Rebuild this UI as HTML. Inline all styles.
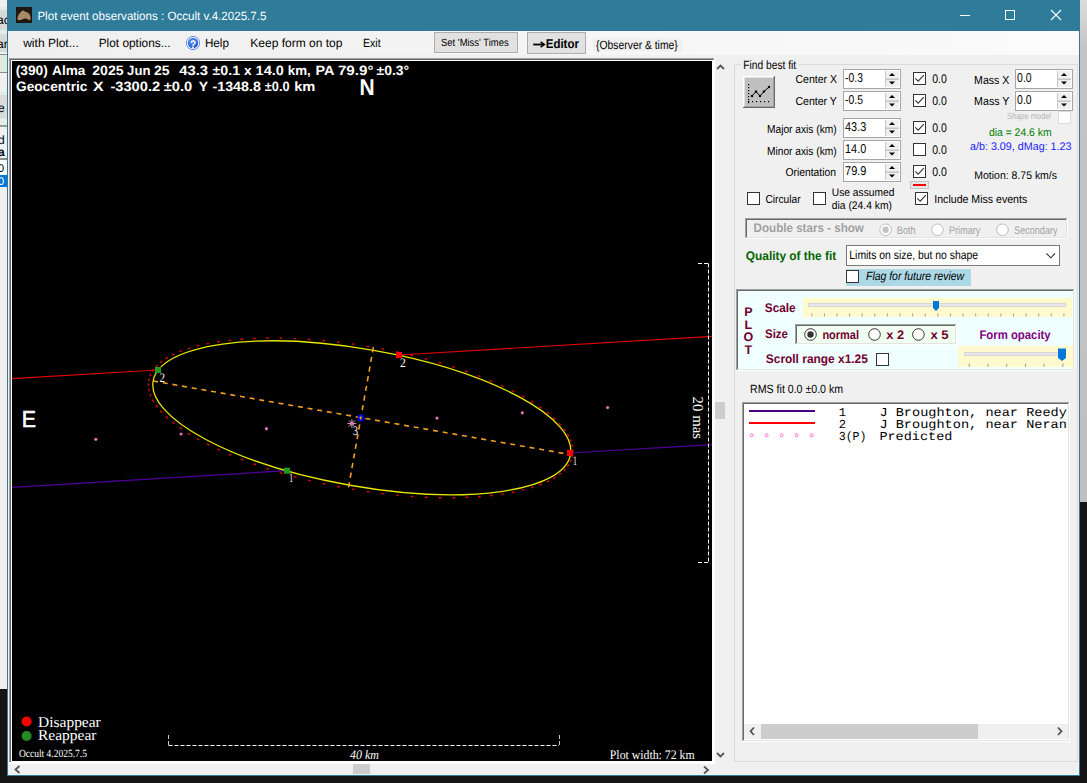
<!DOCTYPE html>
<html><head><meta charset="utf-8"><style>html,body{margin:0;padding:0;background:#151515;overflow:hidden}svg{display:block}</style></head>
<body><svg width="1087" height="783" viewBox="0 0 1087 783" text-rendering="geometricPrecision">
<rect x="0" y="0" width="1087" height="783" fill="#151515" />
<defs><linearGradient id="rg" x1="0" y1="0" x2="0" y2="1"><stop offset="0" stop-color="#dcdcdc"/><stop offset="0.1" stop-color="#c4c4c4"/><stop offset="1" stop-color="#c0c0c0"/></linearGradient><linearGradient id="mg" x1="0" y1="0" x2="1" y2="0"><stop offset="0" stop-color="#efefef"/><stop offset="0.5" stop-color="#f5f5f5"/><stop offset="1" stop-color="#fbfbfb"/></linearGradient><radialGradient id="hg" cx="0.4" cy="0.35" r="0.7"><stop offset="0" stop-color="#5d9cf5"/><stop offset="1" stop-color="#1a4fc9"/></radialGradient></defs>
<rect x="1080" y="0" width="7" height="502" fill="url(#rg)" />
<rect x="0" y="0" width="7" height="689" fill="#f0f0f0" />
<rect x="0" y="7" width="7" height="3" fill="#e2eee2" />
<rect x="0" y="10" width="7" height="20" fill="#d9d9d9" />
<rect x="0" y="30" width="7" height="4" fill="#e2eee2" />
<rect x="0" y="34" width="7" height="18" fill="#d9d9d9" />
<rect x="0" y="54" width="7" height="1" fill="#8a8a8a" />
<rect x="0" y="55" width="7" height="17" fill="#dfeadf" />
<rect x="0" y="72" width="7" height="1" fill="#8a8a8a" />
<rect x="0" y="73" width="7" height="19" fill="#f0f0f0" />
<rect x="0" y="92" width="7" height="3" fill="#e2eee2" />
<rect x="0" y="95" width="7" height="23" fill="#dadada" />
<rect x="0" y="118" width="7" height="7" fill="#e2eee2" />
<rect x="0" y="125" width="7" height="2" fill="#9a9a9a" />
<rect x="0" y="128" width="7" height="30" fill="#f0f0f0" />
<rect x="0" y="158" width="7" height="2" fill="#8a8a8a" />
<rect x="0" y="160" width="7" height="15" fill="#ffffff" />
<rect x="0" y="175" width="7" height="12" fill="#0078d7" />
<rect x="0" y="187" width="7" height="502" fill="#f0f0f0" />
<text x="-3" y="24" style="font-family:'Liberation Sans';font-size:12px" fill="#000">ac</text>
<text x="-3" y="48" style="font-family:'Liberation Sans';font-size:12px" fill="#000">ar</text>
<text x="-2" y="112" style="font-family:'Liberation Sans';font-size:12px" fill="#000">e</text>
<text x="-2" y="144" style="font-family:'Liberation Sans';font-size:12px" fill="#000">d</text>
<text x="-2" y="156" style="font-family:'Liberation Sans';font-size:12px;font-weight:bold" fill="#000">a</text>
<text x="-2" y="172" style="font-family:'Liberation Sans';font-size:11px" fill="#000">0</text>
<text x="-2" y="185" style="font-family:'Liberation Sans';font-size:11px" fill="#fff">0</text>
<rect x="7" y="0" width="1073" height="776" fill="#2e7b9a" />
<rect x="8" y="31" width="1071" height="744" fill="#f0f0f0" />
<rect x="16" y="7" width="16" height="16" fill="#1e1810" />
<path d="M17.5 19 C17.5 16 19 13.5 21 12 C22 10.5 23.5 10 24.5 11.2 C25.5 12.2 26.5 12 27.5 12.5 C29.5 13.5 31 16 30.5 19.5 C29.8 21 28.5 20 27.5 19 C26 18 24 18.5 22 19.5 C20 20.5 18 20.5 17.5 19Z" fill="#a88a66" stroke="none" stroke-width="1" />
<text x="37.40" y="20.20" textLength="229.01" lengthAdjust="spacingAndGlyphs" style="font-family:'Liberation Sans', sans-serif;font-size:12px;" fill="#fff" >Plot event observations : Occult v.4.2025.7.5</text>
<line x1="960" y1="15.5" x2="970" y2="15.5" stroke="#fff" stroke-width="1" />
<rect x="1005.5" y="10.5" width="9" height="9" fill="none" stroke="#fff" stroke-width="1"/>
<line x1="1051" y1="10" x2="1061" y2="20" stroke="#fff" stroke-width="1.1" />
<line x1="1061" y1="10" x2="1051" y2="20" stroke="#fff" stroke-width="1.1" />
<rect x="8" y="31" width="1071" height="24" fill="url(#mg)" />
<text x="23.16" y="46.80" textLength="55.61" lengthAdjust="spacingAndGlyphs" style="font-family:'Liberation Sans', sans-serif;font-size:12px;" fill="#000" >with Plot...</text>
<text x="98.70" y="46.80" textLength="71.89" lengthAdjust="spacingAndGlyphs" style="font-family:'Liberation Sans', sans-serif;font-size:12px;" fill="#000" >Plot options...</text>
<circle cx="193" cy="43" r="6.6" fill="#fff" stroke="#4a7fe0" stroke-width="0.9"/>
<circle cx="193" cy="43" r="5.2" fill="url(#hg)"/>
<text x="190.00" y="47.60" textLength="6.21" lengthAdjust="spacingAndGlyphs" style="font-family:'Liberation Sans', sans-serif;font-size:11px;font-weight:bold;" fill="#fff" >?</text>
<text x="204.90" y="46.80" textLength="24.02" lengthAdjust="spacingAndGlyphs" style="font-family:'Liberation Sans', sans-serif;font-size:12px;" fill="#000" >Help</text>
<text x="250.30" y="46.80" textLength="92.12" lengthAdjust="spacingAndGlyphs" style="font-family:'Liberation Sans', sans-serif;font-size:12px;" fill="#000" >Keep form on top</text>
<text x="363.00" y="46.80" textLength="17.62" lengthAdjust="spacingAndGlyphs" style="font-family:'Liberation Sans', sans-serif;font-size:12px;" fill="#000" >Exit</text>
<rect x="434.5" y="32.5" width="83" height="20" fill="#e1e1e1" stroke="#adadad" stroke-width="1"/>
<text x="441.00" y="45.90" textLength="67.71" lengthAdjust="spacingAndGlyphs" style="font-family:'Liberation Sans', sans-serif;font-size:10.5px;" fill="#000" >Set 'Miss' Times</text>
<rect x="527.5" y="32.5" width="58" height="21" fill="#e1e1e1" stroke="#adadad" stroke-width="1"/>
<line x1="533.2" y1="44.5" x2="543.5" y2="44.5" stroke="#000" stroke-width="1.8" />
<path d="M540.6 41.8 L544.4 44.5 L540.6 47.2" fill="none" stroke="#000" stroke-width="1.5" />
<text x="545.80" y="47.80" textLength="33.09" lengthAdjust="spacingAndGlyphs" style="font-family:'Liberation Sans', sans-serif;font-size:12.75px;font-weight:bold;" fill="#000" >Editor</text>
<rect x="593" y="38" width="89" height="13" fill="#f0f0f0" />
<text x="596.10" y="48.50" textLength="81.62" lengthAdjust="spacingAndGlyphs" style="font-family:'Liberation Sans', sans-serif;font-size:12px;" fill="#000" >{Observer &amp; time}</text>
<rect x="9" y="58" width="706" height="706" fill="#ffffff" />
<rect x="9" y="58" width="705" height="2" fill="#a0a0a0" />
<rect x="9" y="58" width="2" height="704" fill="#a0a0a0" />
<rect x="10" y="59" width="703" height="1" fill="#696969" />
<rect x="10" y="59" width="1" height="703" fill="#696969" />
<rect x="12" y="61" width="700" height="700" fill="#000" />
<rect x="8" y="764" width="707" height="11" fill="#f0f0f0" />
<rect x="715" y="58" width="18" height="717" fill="#f0f0f0" />
<rect x="353" y="764" width="17" height="10" fill="#cdcdcd" />
<rect x="715" y="402" width="10" height="17" fill="#cdcdcd" />
<path d="M19.5 766 L15.5 769.5 L19.5 773" fill="none" stroke="#555" stroke-width="1.8" />
<path d="M704 766.5 L708 770 L704 773.5" fill="none" stroke="#555" stroke-width="1.8" />
<path d="M717 69 L720.5 65.5 L724 69" fill="none" stroke="#555" stroke-width="1.8" />
<path d="M717 753 L720.5 756.5 L724 753" fill="none" stroke="#555" stroke-width="1.8" />
<g clip-path="url(#pc)">
<defs><clipPath id="pc"><rect x="12" y="61" width="700" height="700"/></clipPath></defs>
<text x="15.70" y="75.00" textLength="32.19" lengthAdjust="spacingAndGlyphs" style="font-family:'Liberation Sans', sans-serif;font-size:13.5px;font-weight:bold;" fill="#fff" >(390)</text>
<text x="52.10" y="75.00" textLength="33.37" lengthAdjust="spacingAndGlyphs" style="font-family:'Liberation Sans', sans-serif;font-size:13.5px;font-weight:bold;" fill="#fff" >Alma</text>
<text x="92.20" y="75.00" textLength="31.40" lengthAdjust="spacingAndGlyphs" style="font-family:'Liberation Sans', sans-serif;font-size:13.5px;font-weight:bold;" fill="#fff" >2025</text>
<text x="127.10" y="75.00" textLength="23.37" lengthAdjust="spacingAndGlyphs" style="font-family:'Liberation Sans', sans-serif;font-size:13.5px;font-weight:bold;" fill="#fff" >Jun</text>
<text x="154.00" y="75.00" textLength="15.63" lengthAdjust="spacingAndGlyphs" style="font-family:'Liberation Sans', sans-serif;font-size:13.5px;font-weight:bold;" fill="#fff" >25</text>
<text x="179.20" y="75.00" textLength="28.82" lengthAdjust="spacingAndGlyphs" style="font-family:'Liberation Sans', sans-serif;font-size:13.5px;font-weight:bold;" fill="#fff" >43.3</text>
<text x="212.50" y="75.00" textLength="27.59" lengthAdjust="spacingAndGlyphs" style="font-family:'Liberation Sans', sans-serif;font-size:13.5px;font-weight:bold;" fill="#fff" >±0.1</text>
<text x="244.00" y="75.00" textLength="7.62" lengthAdjust="spacingAndGlyphs" style="font-family:'Liberation Sans', sans-serif;font-size:13.5px;font-weight:bold;" fill="#fff" >x</text>
<text x="255.60" y="75.00" textLength="28.22" lengthAdjust="spacingAndGlyphs" style="font-family:'Liberation Sans', sans-serif;font-size:13.5px;font-weight:bold;" fill="#fff" >14.0</text>
<text x="287.80" y="75.00" textLength="22.98" lengthAdjust="spacingAndGlyphs" style="font-family:'Liberation Sans', sans-serif;font-size:13.5px;font-weight:bold;" fill="#fff" >km,</text>
<text x="315.40" y="75.00" textLength="19.00" lengthAdjust="spacingAndGlyphs" style="font-family:'Liberation Sans', sans-serif;font-size:13.5px;font-weight:bold;" fill="#fff" >PA</text>
<text x="337.90" y="75.00" textLength="35.62" lengthAdjust="spacingAndGlyphs" style="font-family:'Liberation Sans', sans-serif;font-size:13.5px;font-weight:bold;" fill="#fff" >79.9°</text>
<text x="376.50" y="75.00" textLength="32.68" lengthAdjust="spacingAndGlyphs" style="font-family:'Liberation Sans', sans-serif;font-size:13.5px;font-weight:bold;" fill="#fff" >±0.3°</text>
<text x="16.00" y="90.50" textLength="71.39" lengthAdjust="spacingAndGlyphs" style="font-family:'Liberation Sans', sans-serif;font-size:13.5px;font-weight:bold;" fill="#fff" >Geocentric</text>
<text x="93.00" y="90.50" textLength="10.63" lengthAdjust="spacingAndGlyphs" style="font-family:'Liberation Sans', sans-serif;font-size:13.5px;font-weight:bold;" fill="#fff" >X</text>
<text x="110.40" y="90.50" textLength="49.73" lengthAdjust="spacingAndGlyphs" style="font-family:'Liberation Sans', sans-serif;font-size:13.5px;font-weight:bold;" fill="#fff" >-3300.2</text>
<text x="163.80" y="90.50" textLength="28.49" lengthAdjust="spacingAndGlyphs" style="font-family:'Liberation Sans', sans-serif;font-size:13.5px;font-weight:bold;" fill="#fff" >±0.0</text>
<text x="198.70" y="90.50" textLength="9.33" lengthAdjust="spacingAndGlyphs" style="font-family:'Liberation Sans', sans-serif;font-size:13.5px;font-weight:bold;" fill="#fff" >Y</text>
<text x="212.50" y="90.50" textLength="48.32" lengthAdjust="spacingAndGlyphs" style="font-family:'Liberation Sans', sans-serif;font-size:13.5px;font-weight:bold;" fill="#fff" >-1348.8</text>
<text x="264.80" y="90.50" textLength="24.79" lengthAdjust="spacingAndGlyphs" style="font-family:'Liberation Sans', sans-serif;font-size:13.5px;font-weight:bold;" fill="#fff" >±0.0</text>
<text x="294.20" y="90.50" textLength="21.20" lengthAdjust="spacingAndGlyphs" style="font-family:'Liberation Sans', sans-serif;font-size:13.5px;font-weight:bold;" fill="#fff" >km</text>
<text x="359.60" y="94.90" textLength="15.15" lengthAdjust="spacingAndGlyphs" style="font-family:'Liberation Sans', sans-serif;font-size:23px;font-weight:bold;" fill="#fff" >N</text>
<text x="21.80" y="427.00" textLength="14.24" lengthAdjust="spacingAndGlyphs" style="font-family:'Liberation Sans', sans-serif;font-size:23px;" fill="#fff" stroke="#fff" stroke-width="0.6">E</text>
<line x1="12" y1="378.7" x2="157.7" y2="370" stroke="#e00000" stroke-width="1.2" />
<line x1="399" y1="355" x2="712" y2="336.4" stroke="#e00000" stroke-width="1.2" />
<line x1="12" y1="487.3" x2="287" y2="470.7" stroke="#50009a" stroke-width="1.2" />
<line x1="570" y1="453" x2="712" y2="444.6" stroke="#50009a" stroke-width="1.2" />
<circle cx="10.5" cy="444.6" r="1.6" fill="#e070c0"/>
<circle cx="95.8" cy="439.3" r="1.6" fill="#e070c0"/>
<circle cx="181.1" cy="434.0" r="1.6" fill="#e070c0"/>
<circle cx="266.4" cy="428.7" r="1.6" fill="#e070c0"/>
<circle cx="437.0" cy="418.1" r="1.6" fill="#e070c0"/>
<circle cx="522.3" cy="412.8" r="1.6" fill="#e070c0"/>
<circle cx="607.6" cy="407.5" r="1.6" fill="#e070c0"/>
<line x1="572.58" y1="454.62" x2="572.00" y2="457.36" stroke="#dd0000" stroke-width="1.4" />
<line x1="571.31" y1="459.51" x2="570.19" y2="462.08" stroke="#dd0000" stroke-width="1.4" />
<line x1="568.98" y1="464.24" x2="567.40" y2="466.55" stroke="#dd0000" stroke-width="1.4" />
<line x1="565.58" y1="468.75" x2="563.64" y2="470.77" stroke="#dd0000" stroke-width="1.4" />
<line x1="561.15" y1="473.00" x2="558.95" y2="474.73" stroke="#dd0000" stroke-width="1.4" />
<line x1="555.70" y1="476.97" x2="553.31" y2="478.44" stroke="#dd0000" stroke-width="1.4" />
<line x1="549.28" y1="480.64" x2="546.76" y2="481.87" stroke="#dd0000" stroke-width="1.4" />
<line x1="541.93" y1="483.98" x2="539.32" y2="485.01" stroke="#dd0000" stroke-width="1.4" />
<line x1="533.69" y1="486.99" x2="531.02" y2="487.83" stroke="#dd0000" stroke-width="1.4" />
<line x1="524.60" y1="489.64" x2="521.88" y2="490.33" stroke="#dd0000" stroke-width="1.4" />
<line x1="514.71" y1="491.94" x2="511.96" y2="492.48" stroke="#dd0000" stroke-width="1.4" />
<line x1="504.07" y1="493.86" x2="501.30" y2="494.29" stroke="#dd0000" stroke-width="1.4" />
<line x1="492.74" y1="495.41" x2="489.96" y2="495.72" stroke="#dd0000" stroke-width="1.4" />
<line x1="480.77" y1="496.58" x2="477.97" y2="496.79" stroke="#dd0000" stroke-width="1.4" />
<line x1="468.21" y1="497.35" x2="465.42" y2="497.47" stroke="#dd0000" stroke-width="1.4" />
<line x1="455.14" y1="497.74" x2="452.34" y2="497.77" stroke="#dd0000" stroke-width="1.4" />
<line x1="441.61" y1="497.73" x2="438.82" y2="497.68" stroke="#dd0000" stroke-width="1.4" />
<line x1="427.70" y1="497.33" x2="424.90" y2="497.21" stroke="#dd0000" stroke-width="1.4" />
<line x1="413.46" y1="496.55" x2="410.67" y2="496.35" stroke="#dd0000" stroke-width="1.4" />
<line x1="398.97" y1="495.38" x2="396.19" y2="495.11" stroke="#dd0000" stroke-width="1.4" />
<line x1="384.30" y1="493.83" x2="381.52" y2="493.50" stroke="#dd0000" stroke-width="1.4" />
<line x1="369.53" y1="491.91" x2="366.75" y2="491.51" stroke="#dd0000" stroke-width="1.4" />
<line x1="354.71" y1="489.63" x2="351.95" y2="489.17" stroke="#dd0000" stroke-width="1.4" />
<line x1="339.93" y1="487.01" x2="337.18" y2="486.48" stroke="#dd0000" stroke-width="1.4" />
<line x1="325.25" y1="484.05" x2="322.52" y2="483.45" stroke="#dd0000" stroke-width="1.4" />
<line x1="310.76" y1="480.76" x2="308.03" y2="480.11" stroke="#dd0000" stroke-width="1.4" />
<line x1="296.51" y1="477.18" x2="293.80" y2="476.45" stroke="#dd0000" stroke-width="1.4" />
<line x1="282.58" y1="473.30" x2="279.89" y2="472.51" stroke="#dd0000" stroke-width="1.4" />
<line x1="269.03" y1="469.16" x2="266.37" y2="468.30" stroke="#dd0000" stroke-width="1.4" />
<line x1="255.94" y1="464.78" x2="253.30" y2="463.85" stroke="#dd0000" stroke-width="1.4" />
<line x1="243.36" y1="460.17" x2="240.75" y2="459.16" stroke="#dd0000" stroke-width="1.4" />
<line x1="231.35" y1="455.36" x2="228.77" y2="454.27" stroke="#dd0000" stroke-width="1.4" />
<line x1="219.98" y1="450.37" x2="217.44" y2="449.19" stroke="#dd0000" stroke-width="1.4" />
<line x1="209.30" y1="445.23" x2="206.80" y2="443.96" stroke="#dd0000" stroke-width="1.4" />
<line x1="199.35" y1="439.96" x2="196.91" y2="438.59" stroke="#dd0000" stroke-width="1.4" />
<line x1="190.19" y1="434.60" x2="187.82" y2="433.11" stroke="#dd0000" stroke-width="1.4" />
<line x1="181.86" y1="429.16" x2="179.57" y2="427.55" stroke="#dd0000" stroke-width="1.4" />
<line x1="174.40" y1="423.68" x2="172.21" y2="421.93" stroke="#dd0000" stroke-width="1.4" />
<line x1="167.83" y1="418.18" x2="165.77" y2="416.28" stroke="#dd0000" stroke-width="1.4" />
<line x1="162.19" y1="412.70" x2="160.30" y2="410.63" stroke="#dd0000" stroke-width="1.4" />
<line x1="157.49" y1="407.25" x2="155.83" y2="405.00" stroke="#dd0000" stroke-width="1.4" />
<line x1="153.76" y1="401.86" x2="152.38" y2="399.42" stroke="#dd0000" stroke-width="1.4" />
<line x1="150.99" y1="396.55" x2="149.98" y2="393.94" stroke="#dd0000" stroke-width="1.4" />
<line x1="149.20" y1="391.33" x2="148.65" y2="388.58" stroke="#dd0000" stroke-width="1.4" />
<line x1="148.40" y1="386.20" x2="148.40" y2="383.40" stroke="#dd0000" stroke-width="1.4" />
<line x1="148.62" y1="381.18" x2="149.20" y2="378.44" stroke="#dd0000" stroke-width="1.4" />
<line x1="149.89" y1="376.29" x2="151.01" y2="373.72" stroke="#dd0000" stroke-width="1.4" />
<line x1="152.22" y1="371.56" x2="153.80" y2="369.25" stroke="#dd0000" stroke-width="1.4" />
<line x1="155.62" y1="367.05" x2="157.56" y2="365.03" stroke="#dd0000" stroke-width="1.4" />
<line x1="160.05" y1="362.80" x2="162.25" y2="361.07" stroke="#dd0000" stroke-width="1.4" />
<line x1="165.50" y1="358.83" x2="167.89" y2="357.36" stroke="#dd0000" stroke-width="1.4" />
<line x1="171.92" y1="355.16" x2="174.44" y2="353.93" stroke="#dd0000" stroke-width="1.4" />
<line x1="179.27" y1="351.82" x2="181.88" y2="350.79" stroke="#dd0000" stroke-width="1.4" />
<line x1="187.51" y1="348.81" x2="190.18" y2="347.97" stroke="#dd0000" stroke-width="1.4" />
<line x1="196.60" y1="346.16" x2="199.32" y2="345.47" stroke="#dd0000" stroke-width="1.4" />
<line x1="206.49" y1="343.86" x2="209.24" y2="343.32" stroke="#dd0000" stroke-width="1.4" />
<line x1="217.13" y1="341.94" x2="219.90" y2="341.51" stroke="#dd0000" stroke-width="1.4" />
<line x1="228.46" y1="340.39" x2="231.24" y2="340.08" stroke="#dd0000" stroke-width="1.4" />
<line x1="240.43" y1="339.22" x2="243.23" y2="339.01" stroke="#dd0000" stroke-width="1.4" />
<line x1="252.99" y1="338.45" x2="255.78" y2="338.33" stroke="#dd0000" stroke-width="1.4" />
<line x1="266.06" y1="338.06" x2="268.86" y2="338.03" stroke="#dd0000" stroke-width="1.4" />
<line x1="279.59" y1="338.07" x2="282.38" y2="338.12" stroke="#dd0000" stroke-width="1.4" />
<line x1="293.50" y1="338.47" x2="296.30" y2="338.59" stroke="#dd0000" stroke-width="1.4" />
<line x1="307.74" y1="339.25" x2="310.53" y2="339.45" stroke="#dd0000" stroke-width="1.4" />
<line x1="322.23" y1="340.42" x2="325.01" y2="340.69" stroke="#dd0000" stroke-width="1.4" />
<line x1="336.90" y1="341.97" x2="339.68" y2="342.30" stroke="#dd0000" stroke-width="1.4" />
<line x1="351.67" y1="343.89" x2="354.45" y2="344.29" stroke="#dd0000" stroke-width="1.4" />
<line x1="366.49" y1="346.17" x2="369.25" y2="346.63" stroke="#dd0000" stroke-width="1.4" />
<line x1="381.27" y1="348.79" x2="384.02" y2="349.32" stroke="#dd0000" stroke-width="1.4" />
<line x1="395.95" y1="351.75" x2="398.68" y2="352.35" stroke="#dd0000" stroke-width="1.4" />
<line x1="410.44" y1="355.04" x2="413.17" y2="355.69" stroke="#dd0000" stroke-width="1.4" />
<line x1="424.69" y1="358.62" x2="427.40" y2="359.35" stroke="#dd0000" stroke-width="1.4" />
<line x1="438.62" y1="362.50" x2="441.31" y2="363.29" stroke="#dd0000" stroke-width="1.4" />
<line x1="452.17" y1="366.64" x2="454.83" y2="367.50" stroke="#dd0000" stroke-width="1.4" />
<line x1="465.26" y1="371.02" x2="467.90" y2="371.95" stroke="#dd0000" stroke-width="1.4" />
<line x1="477.84" y1="375.63" x2="480.45" y2="376.64" stroke="#dd0000" stroke-width="1.4" />
<line x1="489.85" y1="380.44" x2="492.43" y2="381.53" stroke="#dd0000" stroke-width="1.4" />
<line x1="501.22" y1="385.43" x2="503.76" y2="386.61" stroke="#dd0000" stroke-width="1.4" />
<line x1="511.90" y1="390.57" x2="514.40" y2="391.84" stroke="#dd0000" stroke-width="1.4" />
<line x1="521.85" y1="395.84" x2="524.29" y2="397.21" stroke="#dd0000" stroke-width="1.4" />
<line x1="531.01" y1="401.20" x2="533.38" y2="402.69" stroke="#dd0000" stroke-width="1.4" />
<line x1="539.34" y1="406.64" x2="541.63" y2="408.25" stroke="#dd0000" stroke-width="1.4" />
<line x1="546.80" y1="412.12" x2="548.99" y2="413.87" stroke="#dd0000" stroke-width="1.4" />
<line x1="553.37" y1="417.62" x2="555.43" y2="419.52" stroke="#dd0000" stroke-width="1.4" />
<line x1="559.01" y1="423.10" x2="560.90" y2="425.17" stroke="#dd0000" stroke-width="1.4" />
<line x1="563.71" y1="428.55" x2="565.37" y2="430.80" stroke="#dd0000" stroke-width="1.4" />
<line x1="567.44" y1="433.94" x2="568.82" y2="436.38" stroke="#dd0000" stroke-width="1.4" />
<line x1="570.21" y1="439.25" x2="571.22" y2="441.86" stroke="#dd0000" stroke-width="1.4" />
<line x1="572.00" y1="444.47" x2="572.55" y2="447.22" stroke="#dd0000" stroke-width="1.4" />
<line x1="572.80" y1="449.60" x2="572.80" y2="452.40" stroke="#dd0000" stroke-width="1.4" />
<ellipse cx="361.8" cy="417.8" rx="211.9" ry="68.5" transform="rotate(10 361.8 417.8)" fill="none" stroke="#e6e600" stroke-width="1.3"/>
<line x1="153.1" y1="381.0" x2="570.5" y2="454.6" stroke="#f0a020" stroke-width="1.6" stroke-dasharray="5 4.8"/>
<line x1="373.4" y1="347.2" x2="348.3" y2="488.6" stroke="#f0a020" stroke-width="1.6" stroke-dasharray="5.2 4.6"/>
<rect x="155.0" y="367.0" width="6" height="6" fill="#1f9a1f" />
<rect x="396.0" y="352.0" width="6" height="6" fill="#ff0000" />
<rect x="284.0" y="467.7" width="6" height="6" fill="#1f9a1f" />
<rect x="567.0" y="450.0" width="6" height="6" fill="#ff0000" />
<text x="159.50" y="382.00" textLength="5.50" lengthAdjust="spacingAndGlyphs" style="font-family:'Liberation Serif', serif;font-size:13px;" fill="#fff" >2</text>
<text x="400.00" y="367.00" textLength="5.80" lengthAdjust="spacingAndGlyphs" style="font-family:'Liberation Serif', serif;font-size:13px;" fill="#fff" >2</text>
<text x="289.20" y="482.00" textLength="3.80" lengthAdjust="spacingAndGlyphs" style="font-family:'Liberation Serif', serif;font-size:13px;" fill="#fff" >1</text>
<text x="573.00" y="465.00" textLength="3.90" lengthAdjust="spacingAndGlyphs" style="font-family:'Liberation Serif', serif;font-size:13px;" fill="#fff" >1</text>
<text x="353.00" y="435.00" textLength="5.00" lengthAdjust="spacingAndGlyphs" style="font-family:'Liberation Serif', serif;font-size:13px;" fill="#fff" >3</text>
<circle cx="361" cy="418" r="2.6" fill="none" stroke="#0000ff" stroke-width="1.8"/>
<line x1="347.40" y1="423.50" x2="356.40" y2="423.50" stroke="#a8a8a8" stroke-width="1" />
<line x1="348.72" y1="420.32" x2="355.08" y2="426.68" stroke="#a8a8a8" stroke-width="1" />
<line x1="351.90" y1="419.00" x2="351.90" y2="428.00" stroke="#a8a8a8" stroke-width="1" />
<line x1="355.08" y1="420.32" x2="348.72" y2="426.68" stroke="#a8a8a8" stroke-width="1" />
<circle cx="351.9" cy="423.5" r="2" fill="#f070c0"/>
<line x1="708.5" y1="263.5" x2="708.5" y2="562.5" stroke="#fff" stroke-width="1" stroke-dasharray="4 2"/>
<line x1="698" y1="263.5" x2="709" y2="263.5" stroke="#fff" stroke-width="1" stroke-dasharray="4 2" stroke-dashoffset="0"/>
<line x1="698" y1="562.5" x2="709" y2="562.5" stroke="#fff" stroke-width="1" stroke-dasharray="4 2"/>
<line x1="168.5" y1="745.5" x2="559" y2="745.5" stroke="#fff" stroke-width="1" stroke-dasharray="4 2"/>
<line x1="168.5" y1="735" x2="168.5" y2="746" stroke="#c8c8c8" stroke-width="1" stroke-dasharray="4 2"/>
<line x1="559.5" y1="735" x2="559.5" y2="746" stroke="#c8c8c8" stroke-width="1" stroke-dasharray="4 2"/>
<g transform="translate(692.5 396.6) rotate(90)">
<text x="0.00" y="0.00" textLength="42.41" lengthAdjust="spacingAndGlyphs" style="font-family:'Liberation Serif', serif;font-size:15px;" fill="#fff" >20 mas</text>
</g>
<text x="350.00" y="758.80" textLength="29.01" lengthAdjust="spacingAndGlyphs" style="font-family:'Liberation Serif', serif;font-size:13px;font-style:italic;" fill="#fff" >40 km</text>
<text x="609.80" y="758.90" textLength="84.80" lengthAdjust="spacingAndGlyphs" style="font-family:'Liberation Serif', serif;font-size:13px;" fill="#fff" >Plot width: 72 km</text>
<circle cx="26.6" cy="721.5" r="5" fill="#ff0000"/>
<circle cx="26.6" cy="736" r="5" fill="#228b22"/>
<text x="38.00" y="727.00" textLength="62.78" lengthAdjust="spacingAndGlyphs" style="font-family:'Liberation Serif', serif;font-size:15px;" fill="#fff" >Disappear</text>
<text x="38.00" y="740.40" textLength="58.51" lengthAdjust="spacingAndGlyphs" style="font-family:'Liberation Serif', serif;font-size:15px;" fill="#fff" >Reappear</text>
<text x="18.90" y="756.50" textLength="68.10" lengthAdjust="spacingAndGlyphs" style="font-family:'Liberation Serif', serif;font-size:11px;" fill="#fff" >Occult 4.2025.7.5</text>
</g>
<rect x="734.5" y="64.5" width="343" height="697" fill="none" stroke="#dcdcdc" stroke-width="1"/>
<rect x="741" y="58" width="58" height="12" fill="#f0f0f0" />
<text x="743.30" y="68.80" textLength="52.89" lengthAdjust="spacingAndGlyphs" style="font-family:'Liberation Sans', sans-serif;font-size:12px;" fill="#000" >Find best fit</text>
<rect x="743" y="76" width="32" height="32" fill="#696969" />
<rect x="743" y="76" width="31" height="31" fill="#fff" />
<rect x="744" y="77" width="30" height="30" fill="#a0a0a0" />
<rect x="744" y="77" width="29" height="29" fill="#e3e3e3" />
<rect x="745" y="78" width="28" height="28" fill="#c0c0c0" />
<rect x="748" y="84" width="1.2" height="1.2" fill="#000" />
<rect x="748" y="87" width="1.2" height="1.2" fill="#000" />
<rect x="748" y="90" width="1.2" height="1.2" fill="#000" />
<rect x="748" y="93" width="1.2" height="1.2" fill="#000" />
<rect x="748" y="96" width="1.2" height="1.2" fill="#000" />
<rect x="748" y="99" width="1.2" height="1.2" fill="#000" />
<rect x="748" y="102" width="1.2" height="1.2" fill="#000" />
<rect x="748" y="101" width="1.2" height="1.2" fill="#000" />
<rect x="752" y="101" width="1.2" height="1.2" fill="#000" />
<rect x="756" y="101" width="1.2" height="1.2" fill="#000" />
<rect x="760" y="101" width="1.2" height="1.2" fill="#000" />
<rect x="764" y="101" width="1.2" height="1.2" fill="#000" />
<rect x="768" y="101" width="1.2" height="1.2" fill="#000" />
<path d="M752 96 L756 91.5 L760 96 L764 91.5 L769 87" fill="none" stroke="#000" stroke-width="1" />
<circle cx="752" cy="96" r="1.2" fill="#000"/>
<circle cx="756" cy="91.5" r="1.2" fill="#000"/>
<circle cx="760" cy="96" r="1.2" fill="#000"/>
<circle cx="764" cy="91.5" r="1.2" fill="#000"/>
<circle cx="769" cy="87" r="1.2" fill="#000"/>
<text x="795.50" y="83.30" textLength="41.41" lengthAdjust="spacingAndGlyphs" style="font-family:'Liberation Sans', sans-serif;font-size:11.5px;" fill="#000" >Center X</text>
<text x="795.50" y="105.20" textLength="41.38" lengthAdjust="spacingAndGlyphs" style="font-family:'Liberation Sans', sans-serif;font-size:11.5px;" fill="#000" >Center Y</text>
<text x="767.00" y="132.60" textLength="69.69" lengthAdjust="spacingAndGlyphs" style="font-family:'Liberation Sans', sans-serif;font-size:11.5px;" fill="#000" >Major axis (km)</text>
<text x="767.00" y="154.50" textLength="69.69" lengthAdjust="spacingAndGlyphs" style="font-family:'Liberation Sans', sans-serif;font-size:11.5px;" fill="#000" >Minor axis (km)</text>
<text x="785.40" y="175.80" textLength="50.62" lengthAdjust="spacingAndGlyphs" style="font-family:'Liberation Sans', sans-serif;font-size:11.5px;" fill="#000" >Orientation</text>
<rect x="843.5" y="69.5" width="57" height="19" fill="#fff" stroke="#a6a6a6" stroke-width="1"/>
<rect x="885" y="71" width="14" height="16" fill="#f0f0f0" />
<rect x="885" y="71" width="1" height="16" fill="#c8c8c8" />
<rect x="886" y="78.5" width="13" height="1.5" fill="#c4c4c4" />
<path d="M889 76 L892 73 L895 76Z" fill="#000" stroke="none" stroke-width="1" />
<path d="M889 81.5 L892 84.5 L895 81.5Z" fill="#000" stroke="none" stroke-width="1" />
<text x="845.10" y="82.10" textLength="17.78" lengthAdjust="spacingAndGlyphs" style="font-family:'Liberation Sans', sans-serif;font-size:12.75px;" fill="#000" >-0.3</text>
<rect x="843.5" y="91.5" width="57" height="19" fill="#fff" stroke="#a6a6a6" stroke-width="1"/>
<rect x="885" y="93" width="14" height="16" fill="#f0f0f0" />
<rect x="885" y="93" width="1" height="16" fill="#c8c8c8" />
<rect x="886" y="100.5" width="13" height="1.5" fill="#c4c4c4" />
<path d="M889 98 L892 95 L895 98Z" fill="#000" stroke="none" stroke-width="1" />
<path d="M889 103.5 L892 106.5 L895 103.5Z" fill="#000" stroke="none" stroke-width="1" />
<text x="845.10" y="104.10" textLength="17.78" lengthAdjust="spacingAndGlyphs" style="font-family:'Liberation Sans', sans-serif;font-size:12.75px;" fill="#000" >-0.5</text>
<rect x="843.5" y="118.5" width="57" height="19" fill="#fff" stroke="#a6a6a6" stroke-width="1"/>
<rect x="885" y="120" width="14" height="16" fill="#f0f0f0" />
<rect x="885" y="120" width="1" height="16" fill="#c8c8c8" />
<rect x="886" y="127.5" width="13" height="1.5" fill="#c4c4c4" />
<path d="M889 125 L892 122 L895 125Z" fill="#000" stroke="none" stroke-width="1" />
<path d="M889 130.5 L892 133.5 L895 130.5Z" fill="#000" stroke="none" stroke-width="1" />
<text x="845.10" y="131.10" textLength="21.11" lengthAdjust="spacingAndGlyphs" style="font-family:'Liberation Sans', sans-serif;font-size:12.75px;" fill="#000" >43.3</text>
<rect x="843.5" y="140.5" width="57" height="19" fill="#fff" stroke="#a6a6a6" stroke-width="1"/>
<rect x="885" y="142" width="14" height="16" fill="#f0f0f0" />
<rect x="885" y="142" width="1" height="16" fill="#c8c8c8" />
<rect x="886" y="149.5" width="13" height="1.5" fill="#c4c4c4" />
<path d="M889 147 L892 144 L895 147Z" fill="#000" stroke="none" stroke-width="1" />
<path d="M889 152.5 L892 155.5 L895 152.5Z" fill="#000" stroke="none" stroke-width="1" />
<text x="845.10" y="153.10" textLength="21.11" lengthAdjust="spacingAndGlyphs" style="font-family:'Liberation Sans', sans-serif;font-size:12.75px;" fill="#000" >14.0</text>
<rect x="843.5" y="162.5" width="57" height="19" fill="#fff" stroke="#a6a6a6" stroke-width="1"/>
<rect x="885" y="164" width="14" height="16" fill="#f0f0f0" />
<rect x="885" y="164" width="1" height="16" fill="#c8c8c8" />
<rect x="886" y="171.5" width="13" height="1.5" fill="#c4c4c4" />
<path d="M889 169 L892 166 L895 169Z" fill="#000" stroke="none" stroke-width="1" />
<path d="M889 174.5 L892 177.5 L895 174.5Z" fill="#000" stroke="none" stroke-width="1" />
<text x="845.10" y="175.10" textLength="21.31" lengthAdjust="spacingAndGlyphs" style="font-family:'Liberation Sans', sans-serif;font-size:12.75px;" fill="#000" >79.9</text>
<rect x="1015.5" y="69.5" width="57" height="19" fill="#fff" stroke="#a6a6a6" stroke-width="1"/>
<rect x="1057" y="71" width="14" height="16" fill="#f0f0f0" />
<rect x="1057" y="71" width="1" height="16" fill="#c8c8c8" />
<rect x="1058" y="78.5" width="13" height="1.5" fill="#c4c4c4" />
<path d="M1061 76 L1064 73 L1067 76Z" fill="#000" stroke="none" stroke-width="1" />
<path d="M1061 81.5 L1064 84.5 L1067 81.5Z" fill="#000" stroke="none" stroke-width="1" />
<text x="1017.10" y="82.10" textLength="14.50" lengthAdjust="spacingAndGlyphs" style="font-family:'Liberation Sans', sans-serif;font-size:12.75px;" fill="#000" >0.0</text>
<rect x="1015.5" y="91.5" width="57" height="19" fill="#fff" stroke="#a6a6a6" stroke-width="1"/>
<rect x="1057" y="93" width="14" height="16" fill="#f0f0f0" />
<rect x="1057" y="93" width="1" height="16" fill="#c8c8c8" />
<rect x="1058" y="100.5" width="13" height="1.5" fill="#c4c4c4" />
<path d="M1061 98 L1064 95 L1067 98Z" fill="#000" stroke="none" stroke-width="1" />
<path d="M1061 103.5 L1064 106.5 L1067 103.5Z" fill="#000" stroke="none" stroke-width="1" />
<text x="1017.10" y="104.10" textLength="14.50" lengthAdjust="spacingAndGlyphs" style="font-family:'Liberation Sans', sans-serif;font-size:12.75px;" fill="#000" >0.0</text>
<rect x="913.5" y="72.5" width="12" height="12" fill="#fff" stroke="#333333" stroke-width="1"/>
<path d="M915.3 78.3 L918.2 81.2 L923.8 75.2" fill="none" stroke="#333" stroke-width="1.1" />
<rect x="913.5" y="94.5" width="12" height="12" fill="#fff" stroke="#333333" stroke-width="1"/>
<path d="M915.3 100.3 L918.2 103.2 L923.8 97.2" fill="none" stroke="#333" stroke-width="1.1" />
<rect x="913.5" y="121.5" width="12" height="12" fill="#fff" stroke="#333333" stroke-width="1"/>
<path d="M915.3 127.3 L918.2 130.2 L923.8 124.2" fill="none" stroke="#333" stroke-width="1.1" />
<rect x="913.5" y="143.5" width="12" height="12" fill="#fff" stroke="#333333" stroke-width="1"/>
<rect x="913.5" y="165.5" width="12" height="12" fill="#fff" stroke="#333333" stroke-width="1"/>
<path d="M915.3 171.3 L918.2 174.2 L923.8 168.2" fill="none" stroke="#333" stroke-width="1.1" />
<text x="932.20" y="83.00" textLength="14.60" lengthAdjust="spacingAndGlyphs" style="font-family:'Liberation Sans', sans-serif;font-size:12.5px;" fill="#000" >0.0</text>
<text x="932.20" y="104.80" textLength="14.60" lengthAdjust="spacingAndGlyphs" style="font-family:'Liberation Sans', sans-serif;font-size:12.5px;" fill="#000" >0.0</text>
<text x="932.20" y="132.20" textLength="14.60" lengthAdjust="spacingAndGlyphs" style="font-family:'Liberation Sans', sans-serif;font-size:12.5px;" fill="#000" >0.0</text>
<text x="932.20" y="154.20" textLength="14.60" lengthAdjust="spacingAndGlyphs" style="font-family:'Liberation Sans', sans-serif;font-size:12.5px;" fill="#000" >0.0</text>
<text x="932.20" y="176.20" textLength="14.60" lengthAdjust="spacingAndGlyphs" style="font-family:'Liberation Sans', sans-serif;font-size:12.5px;" fill="#000" >0.0</text>
<rect x="910.5" y="181.5" width="18" height="7" fill="#e6e6e6" stroke="#c4c4c4" stroke-width="1"/>
<rect x="913" y="184" width="13" height="2" fill="#ff0000" />
<text x="974.10" y="83.50" textLength="35.29" lengthAdjust="spacingAndGlyphs" style="font-family:'Liberation Sans', sans-serif;font-size:11.5px;" fill="#000" >Mass X</text>
<text x="974.10" y="105.40" textLength="35.31" lengthAdjust="spacingAndGlyphs" style="font-family:'Liberation Sans', sans-serif;font-size:11.5px;" fill="#000" >Mass Y</text>
<text x="1007.00" y="118.80" textLength="43.99" lengthAdjust="spacingAndGlyphs" style="font-family:'Liberation Sans', sans-serif;font-size:9px;" fill="#b4b4b4" >Shape model</text>
<rect x="1058.5" y="111.5" width="12" height="12" fill="#fff" stroke="#dcdcdc" stroke-width="1"/>
<text x="988.90" y="135.50" textLength="62.71" lengthAdjust="spacingAndGlyphs" style="font-family:'Liberation Sans', sans-serif;font-size:11px;" fill="#008000" >dia = 24.6 km</text>
<text x="970.00" y="149.60" textLength="101.51" lengthAdjust="spacingAndGlyphs" style="font-family:'Liberation Sans', sans-serif;font-size:11px;" fill="#2020ff" >a/b: 3.09, dMag: 1.23</text>
<text x="974.30" y="179.40" textLength="82.72" lengthAdjust="spacingAndGlyphs" style="font-family:'Liberation Sans', sans-serif;font-size:11px;" fill="#000" >Motion: 8.75 km/s</text>
<rect x="747.5" y="192.5" width="12" height="12" fill="#fff" stroke="#333333" stroke-width="1"/>
<text x="765.40" y="202.70" textLength="35.20" lengthAdjust="spacingAndGlyphs" style="font-family:'Liberation Sans', sans-serif;font-size:11.5px;" fill="#000" >Circular</text>
<rect x="813.5" y="192.5" width="12" height="12" fill="#fff" stroke="#333333" stroke-width="1"/>
<text x="831.80" y="195.60" textLength="62.59" lengthAdjust="spacingAndGlyphs" style="font-family:'Liberation Sans', sans-serif;font-size:11px;" fill="#000" >Use assumed</text>
<text x="831.80" y="208.50" textLength="60.21" lengthAdjust="spacingAndGlyphs" style="font-family:'Liberation Sans', sans-serif;font-size:11px;" fill="#000" >dia (24.4 km)</text>
<rect x="915.5" y="192.5" width="12" height="12" fill="#fff" stroke="#333333" stroke-width="1"/>
<path d="M917.3 198.3 L920.2 201.2 L925.8 195.2" fill="none" stroke="#333" stroke-width="1.1" />
<text x="934.30" y="202.80" textLength="92.92" lengthAdjust="spacingAndGlyphs" style="font-family:'Liberation Sans', sans-serif;font-size:11.5px;" fill="#000" >Include Miss events</text>
<rect x="745" y="218" width="323" height="21" fill="#ffffff" />
<rect x="745" y="218" width="322" height="20" fill="#a0a0a0" />
<rect x="746" y="219" width="321" height="19" fill="#e3e3e3" />
<rect x="746" y="219" width="320" height="18" fill="#696969" />
<rect x="747" y="220" width="319" height="17" fill="#f0f0f0" />
<text x="753.60" y="232.40" textLength="110.26" lengthAdjust="spacingAndGlyphs" style="font-family:'Liberation Sans', sans-serif;font-size:12.5px;font-weight:bold;" fill="#a0a0a0" >Double stars - show</text>
<circle cx="885.6" cy="229.8" r="5.8" fill="#fff" stroke="#bcbcbc" stroke-width="1"/>
<circle cx="885.6" cy="229.8" r="3.2" fill="#c4c4c4"/>
<text x="896.80" y="234.00" textLength="18.92" lengthAdjust="spacingAndGlyphs" style="font-family:'Liberation Sans', sans-serif;font-size:11px;" fill="#a0a0a0" >Both</text>
<circle cx="937.5" cy="229.8" r="5.8" fill="#fff" stroke="#bcbcbc" stroke-width="1"/>
<text x="949.00" y="234.00" textLength="31.40" lengthAdjust="spacingAndGlyphs" style="font-family:'Liberation Sans', sans-serif;font-size:11px;" fill="#a0a0a0" >Primary</text>
<circle cx="1002.5" cy="229.8" r="5.8" fill="#fff" stroke="#bcbcbc" stroke-width="1"/>
<text x="1014.30" y="234.00" textLength="43.11" lengthAdjust="spacingAndGlyphs" style="font-family:'Liberation Sans', sans-serif;font-size:11px;" fill="#a0a0a0" >Secondary</text>
<text x="745.80" y="259.50" textLength="90.41" lengthAdjust="spacingAndGlyphs" style="font-family:'Liberation Sans', sans-serif;font-size:12.5px;font-weight:bold;" fill="#006400" >Quality of the fit</text>
<rect x="846.5" y="245.5" width="213" height="20" fill="#fff" stroke="#7a7a7a" stroke-width="1"/>
<text x="849.30" y="258.50" textLength="128.71" lengthAdjust="spacingAndGlyphs" style="font-family:'Liberation Sans', sans-serif;font-size:12px;" fill="#000" >Limits on size, but no shape</text>
<path d="M1046.5 253.5 L1050.8 257.8 L1055 253.5" fill="none" stroke="#333" stroke-width="1.1" />
<rect x="846" y="269" width="125" height="17" fill="#add8e6" />
<rect x="846.5" y="270.5" width="12" height="12" fill="#fff" stroke="#333333" stroke-width="1"/>
<text x="866.00" y="279.90" textLength="98.10" lengthAdjust="spacingAndGlyphs" style="font-family:'Liberation Sans', sans-serif;font-size:12px;font-style:italic;" fill="#000" >Flag for future review</text>
<rect x="736" y="289" width="339" height="82" fill="#ffffff" />
<rect x="736" y="289" width="338" height="81" fill="#a0a0a0" />
<rect x="737" y="290" width="337" height="80" fill="#e3e3e3" />
<rect x="737" y="290" width="336" height="79" fill="#696969" />
<rect x="738" y="291" width="335" height="78" fill="#f0ffff" />
<text x="744.13" y="315.7" style="font-family:'Liberation Sans';font-size:12.5px;font-weight:bold" fill="#70002e">P</text>
<text x="744.48" y="328.8" style="font-family:'Liberation Sans';font-size:12.5px;font-weight:bold" fill="#70002e">L</text>
<text x="743.44" y="341.3" style="font-family:'Liberation Sans';font-size:12.5px;font-weight:bold" fill="#70002e">O</text>
<text x="744.48" y="354.4" style="font-family:'Liberation Sans';font-size:12.5px;font-weight:bold" fill="#70002e">T</text>
<text x="764.80" y="311.60" textLength="30.88" lengthAdjust="spacingAndGlyphs" style="font-family:'Liberation Sans', sans-serif;font-size:12.5px;font-weight:bold;" fill="#70002e" >Scale</text>
<rect x="803" y="298" width="269" height="19" fill="#fffacd" />
<rect x="808.5" y="303.5" width="257" height="3" fill="#e7e7e7" stroke="#d6d6d6" stroke-width="1"/>
<path d="M933 301 L939 301 L939 308 L936 311 L933 308Z" fill="#0078d7" stroke="none" stroke-width="1" />
<rect x="811.3" y="313.5" width="1" height="3" fill="#a0a0a0" />
<rect x="823.9" y="313.5" width="1" height="3" fill="#a0a0a0" />
<rect x="836.5" y="313.5" width="1" height="3" fill="#a0a0a0" />
<rect x="849.1" y="313.5" width="1" height="3" fill="#a0a0a0" />
<rect x="861.7" y="313.5" width="1" height="3" fill="#a0a0a0" />
<rect x="874.3" y="313.5" width="1" height="3" fill="#a0a0a0" />
<rect x="886.9" y="313.5" width="1" height="3" fill="#a0a0a0" />
<rect x="899.5" y="313.5" width="1" height="3" fill="#a0a0a0" />
<rect x="912.1" y="313.5" width="1" height="3" fill="#a0a0a0" />
<rect x="924.7" y="313.5" width="1" height="3" fill="#a0a0a0" />
<rect x="937.3" y="313.5" width="1" height="3" fill="#a0a0a0" />
<rect x="950.0" y="313.5" width="1" height="3" fill="#a0a0a0" />
<rect x="962.6" y="313.5" width="1" height="3" fill="#a0a0a0" />
<rect x="975.2" y="313.5" width="1" height="3" fill="#a0a0a0" />
<rect x="987.8" y="313.5" width="1" height="3" fill="#a0a0a0" />
<rect x="1000.4" y="313.5" width="1" height="3" fill="#a0a0a0" />
<rect x="1013.0" y="313.5" width="1" height="3" fill="#a0a0a0" />
<rect x="1025.6" y="313.5" width="1" height="3" fill="#a0a0a0" />
<rect x="1038.2" y="313.5" width="1" height="3" fill="#a0a0a0" />
<rect x="1050.8" y="313.5" width="1" height="3" fill="#a0a0a0" />
<rect x="1063.4" y="313.5" width="1" height="3" fill="#a0a0a0" />
<text x="765.00" y="337.80" textLength="22.91" lengthAdjust="spacingAndGlyphs" style="font-family:'Liberation Sans', sans-serif;font-size:12.5px;font-weight:bold;" fill="#70002e" >Size</text>
<rect x="795" y="324" width="162" height="21" fill="#ffffff" />
<rect x="795" y="324" width="161" height="20" fill="#a0a0a0" />
<rect x="796" y="325" width="160" height="19" fill="#e3e3e3" />
<rect x="796" y="325" width="159" height="18" fill="#696969" />
<rect x="797" y="326" width="158" height="17" fill="#f0fff0" />
<circle cx="810.5" cy="334.5" r="5.8" fill="#fff" stroke="#333" stroke-width="1"/>
<circle cx="810.5" cy="334.5" r="3.2" fill="#333"/>
<text x="822.40" y="338.50" textLength="36.59" lengthAdjust="spacingAndGlyphs" style="font-family:'Liberation Sans', sans-serif;font-size:12.5px;font-weight:bold;" fill="#70002e" >normal</text>
<circle cx="874.5" cy="334.5" r="5.8" fill="#fff" stroke="#333" stroke-width="1"/>
<text x="886.30" y="338.50" textLength="17.80" lengthAdjust="spacingAndGlyphs" style="font-family:'Liberation Sans', sans-serif;font-size:12.5px;font-weight:bold;" fill="#70002e" >x 2</text>
<circle cx="918.4" cy="334.5" r="5.8" fill="#fff" stroke="#333" stroke-width="1"/>
<text x="930.40" y="338.50" textLength="18.30" lengthAdjust="spacingAndGlyphs" style="font-family:'Liberation Sans', sans-serif;font-size:12.5px;font-weight:bold;" fill="#70002e" >x 5</text>
<text x="765.80" y="363.30" textLength="102.10" lengthAdjust="spacingAndGlyphs" style="font-family:'Liberation Sans', sans-serif;font-size:12.5px;font-weight:bold;" fill="#70002e" >Scroll range x1.25</text>
<rect x="876.5" y="353.5" width="12" height="12" fill="#fff" stroke="#333333" stroke-width="1"/>
<text x="979.40" y="338.70" textLength="71.29" lengthAdjust="spacingAndGlyphs" style="font-family:'Liberation Sans', sans-serif;font-size:12.5px;font-weight:bold;" fill="#800080" >Form opacity</text>
<rect x="958" y="346" width="115" height="21" fill="#fffacd" />
<rect x="964.5" y="352.5" width="101" height="3" fill="#e7e7e7" stroke="#d6d6d6" stroke-width="1"/>
<path d="M1058 348.5 L1066 348.5 L1066 358 L1062 361 L1058 358Z" fill="#0078d7" stroke="none" stroke-width="1" />
<rect x="968.7" y="363.5" width="1" height="3.5" fill="#a0a0a0" />
<rect x="987.5" y="363.5" width="1" height="3.5" fill="#a0a0a0" />
<rect x="1006.2" y="363.5" width="1" height="3.5" fill="#a0a0a0" />
<rect x="1025" y="363.5" width="1" height="3.5" fill="#a0a0a0" />
<rect x="1043.6" y="363.5" width="1" height="3.5" fill="#a0a0a0" />
<rect x="1062.4" y="363.5" width="1" height="3.5" fill="#a0a0a0" />
<text x="750.10" y="392.60" textLength="92.98" lengthAdjust="spacingAndGlyphs" style="font-family:'Liberation Sans', sans-serif;font-size:12px;" fill="#000" >RMS fit 0.0 ±0.0 km</text>
<rect x="742" y="402" width="328" height="340" fill="#ffffff" />
<rect x="742" y="402" width="327" height="339" fill="#a0a0a0" />
<rect x="743" y="403" width="326" height="338" fill="#e3e3e3" />
<rect x="743" y="403" width="325" height="337" fill="#696969" />
<rect x="744" y="404" width="324" height="336" fill="#ffffff" />
<rect x="749" y="410" width="66" height="2" fill="#4b0082" />
<rect x="749" y="422" width="66" height="2" fill="#ff0000" />
<circle cx="751.6" cy="435.3" r="1.5" fill="none" stroke="#ff70d0" stroke-width="1"/>
<circle cx="766.6" cy="435.3" r="1.5" fill="none" stroke="#ff70d0" stroke-width="1"/>
<circle cx="781.6" cy="435.3" r="1.5" fill="none" stroke="#ff70d0" stroke-width="1"/>
<circle cx="796.6" cy="435.3" r="1.5" fill="none" stroke="#ff70d0" stroke-width="1"/>
<circle cx="811.6" cy="435.3" r="1.5" fill="none" stroke="#ff70d0" stroke-width="1"/>
<text x="838.70" y="415.60" textLength="7.32" lengthAdjust="spacingAndGlyphs" style="font-family:'Liberation Mono', monospace;font-size:12.2px;" fill="#000" >1</text>
<text x="838.70" y="427.80" textLength="7.32" lengthAdjust="spacingAndGlyphs" style="font-family:'Liberation Mono', monospace;font-size:12.2px;" fill="#000" >2</text>
<text x="838.70" y="440.00" textLength="27.80" lengthAdjust="spacingAndGlyphs" style="font-family:'Liberation Mono', monospace;font-size:12.2px;" fill="#000" >3(P)</text>
<text x="879.40" y="415.60" textLength="187.52" lengthAdjust="spacingAndGlyphs" style="font-family:'Liberation Mono', monospace;font-size:12.2px;" fill="#000" >J Broughton, near Reedy</text>
<text x="879.40" y="427.80" textLength="187.52" lengthAdjust="spacingAndGlyphs" style="font-family:'Liberation Mono', monospace;font-size:12.2px;" fill="#000" >J Broughton, near Neran</text>
<text x="879.40" y="440.00" textLength="73.01" lengthAdjust="spacingAndGlyphs" style="font-family:'Liberation Mono', monospace;font-size:12.2px;" fill="#000" >Predicted</text>
<rect x="744" y="724" width="324" height="15" fill="#f0f0f0" />
<rect x="761" y="724" width="217" height="15" fill="#cdcdcd" />
<path d="M754 727.5 L750.5 731.3 L754 735" fill="none" stroke="#555" stroke-width="1.8" />
<path d="M1058 727.5 L1061.5 731.3 L1058 735" fill="none" stroke="#555" stroke-width="1.8" />
</svg></body></html>
